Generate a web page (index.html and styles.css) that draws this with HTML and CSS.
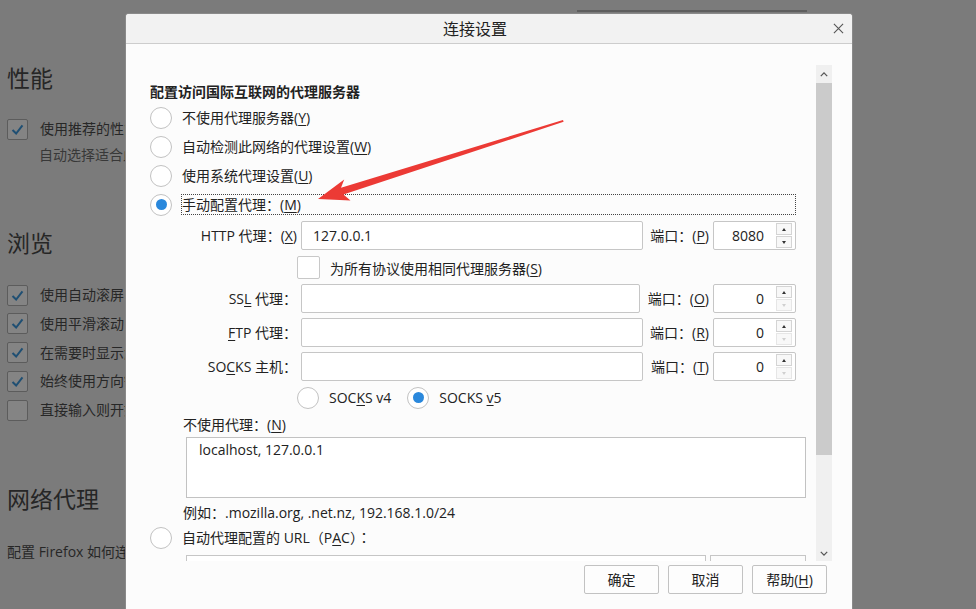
FILE: index.html
```html
<!DOCTYPE html>
<html lang="zh-CN">
<head>
<meta charset="utf-8">
<title>连接设置</title>
<link rel="stylesheet" href="styles.css">
</head>
<body>
<div class="page">
  <div class="topbar"><div class="search"></div></div>
  <h2 class="sec sec-perf">性能</h2>
  <div class="cb-row first"><span class="cb on"><svg viewBox="0 0 21 21"><path d="M5 11 L9 15 L16 6" /></svg></span><span>使用推荐的性能设置</span></div>
  <div class="sub">自动选择适合此计算机的性能设置。</div>
  <h2 class="sec sec-browse">浏览</h2>
  <div class="cb-list">
    <div class="cb-row"><span class="cb on"><svg viewBox="0 0 21 21"><path d="M5 11 L9 15 L16 6" /></svg></span><span>使用自动滚屏</span></div>
    <div class="cb-row"><span class="cb on"><svg viewBox="0 0 21 21"><path d="M5 11 L9 15 L16 6" /></svg></span><span>使用平滑滚动</span></div>
    <div class="cb-row"><span class="cb on"><svg viewBox="0 0 21 21"><path d="M5 11 L9 15 L16 6" /></svg></span><span>在需要时显示触摸键盘</span></div>
    <div class="cb-row"><span class="cb on"><svg viewBox="0 0 21 21"><path d="M5 11 L9 15 L16 6" /></svg></span><span>始终使用方向键浏览网页</span></div>
    <div class="cb-row"><span class="cb"></span><span>直接输入则开始查找</span></div>
  </div>
  <h2 class="sec sec-net">网络代理</h2>
  <div class="net-desc">配置 Firefox 如何连接至互联网。</div>
</div>

<div class="dialog">
  <div class="titlebar">
    <div class="title">连接设置</div>
    <div class="close"><svg viewBox="0 0 12 12"><path d="M1 1 L11 11 M11 1 L1 11" /></svg></div>
  </div>
  <div class="dbody">
    <div class="content">
      <div class="group-title">配置访问国际互联网的代理服务器</div>
      <div class="radio-list">
        <div class="radio-row"><span class="radio"></span><span class="rlabel">不使用代理服务器(<u>Y</u>)</span></div>
        <div class="radio-row"><span class="radio"></span><span class="rlabel">自动检测此网络的代理设置(<u>W</u>)</span></div>
        <div class="radio-row"><span class="radio"></span><span class="rlabel">使用系统代理设置(<u>U</u>)</span></div>
        <div class="radio-row"><span class="radio on"></span><span class="rlabel focus">手动配置代理<span class="colon">：</span>(<u>M</u>)</span></div>
      </div>

      <div class="proxy-grid">
        <div class="flabel">HTTP 代理<span class="colon">：</span>(<u>X</u>)</div>
        <div class="field">127.0.0.1</div>
        <div class="plabel">端口<span class="colon">：</span>(<u>P</u>)</div>
        <div class="port"><span class="val">8080</span><span class="spin"><span class="sbtn"><i class="up"></i></span><span class="sbtn"><i class="down"></i></span></span></div>

        <div class="span-row cb-line"><span class="dcb"></span><span>为所有协议使用相同代理服务器(<u>S</u>)</span></div>

        <div class="flabel">SS<u>L</u> 代理<span class="colon">：</span></div>
        <div class="field short"></div>
        <div class="plabel">端口<span class="colon">：</span>(<u>O</u>)</div>
        <div class="port"><span class="val">0</span><span class="spin"><span class="sbtn"><i class="up"></i></span><span class="sbtn dis"><i class="down"></i></span></span></div>

        <div class="flabel"><u>F</u>TP 代理<span class="colon">：</span></div>
        <div class="field"></div>
        <div class="plabel">端口<span class="colon">：</span>(<u>R</u>)</div>
        <div class="port"><span class="val">0</span><span class="spin"><span class="sbtn"><i class="up"></i></span><span class="sbtn dis"><i class="down"></i></span></span></div>

        <div class="flabel">SO<u>C</u>KS 主机<span class="colon">：</span></div>
        <div class="field"></div>
        <div class="plabel">端口<span class="colon">：</span>(<u>T</u>)</div>
        <div class="port"><span class="val">0</span><span class="spin"><span class="sbtn"><i class="up"></i></span><span class="sbtn dis"><i class="down"></i></span></span></div>

        <div class="span-row ver-line">
          <span class="radio"></span><span class="vlabel">SOC<u>K</u>S v4</span>
          <span class="radio on"></span><span class="vlabel">SOCKS <u>v</u>5</span>
        </div>
      </div>

      <div class="np-label">不使用代理<span class="colon">：</span>(<u>N</u>)</div>
      <div class="textarea">localhost, 127.0.0.1</div>
      <div class="example">例如<span class="colon">：</span>.mozilla.org, .net.nz, 192.168.1.0/24</div>
      <div class="radio-row pac"><span class="radio"></span><span class="rlabel">自动代理配置的 URL<span class="paren">（</span>P<u>A</u>C<span class="paren">）</span><span class="colon">：</span></span></div>
      <div class="pac-line"><div class="pac-input"></div><div class="pac-btn"></div></div>
    </div>
    <div class="scrollbar">
      <div class="sb-up"><svg viewBox="0 0 10 6"><path d="M1 5 L5 1 L9 5" /></svg></div>
      <div class="sb-thumb"></div>
      <div class="sb-space"></div>
      <div class="sb-down"><svg viewBox="0 0 10 6"><path d="M1 1 L5 5 L9 1" /></svg></div>
    </div>
  </div>
  <div class="footer">
    <button class="btn">确定</button>
    <button class="btn">取消</button>
    <button class="btn">帮助(<u>H</u>)</button>
  </div>
</div>

<svg class="arrow" viewBox="0 0 260 100" width="260" height="100">
  <polygon points="253,10 253.6,11.8 33.4,84.6 40.5,90.5 8,89 34.2,69.6 31,77.8" />
</svg>
</body>
</html>
```

FILE: styles.css
```css
* { box-sizing: border-box; }
html, body { margin: 0; padding: 0; }
body {
  width: 976px;
  height: 609px;
  overflow: hidden;
  position: relative;
  background: #7b7b7b;
  font-family: "Open Sans", "Noto Sans CJK SC", sans-serif;
  font-size: 14px;
  color: #222;
}
u { text-decoration: underline; text-underline-offset: 2px; }
.colon { font-family: "Noto Sans CJK TC", sans-serif; }
.paren { font-family: "Noto Sans CJK TC", sans-serif; }

/* background page */
.page { padding-left: 7px; color: #272727; }
.topbar { height: 12px; display: flex; padding-left: 570px; }
.search { width: 230px; height: 12px; border-bottom: 2px solid #5e5e5e; }
.sec { margin: 0; font-weight: normal; font-size: 23px; line-height: 32px; height: 32px; color: #262626; }
.sec-perf { margin-top: 50px; }
.sec-browse { margin-top: 62px; }
.sec-net { margin-top: 62px; }
.cb-row { display: flex; align-items: center; gap: 12px; height: 22px; white-space: nowrap; line-height: 22px; }
.cb-row.first { margin-top: 24px; }
.cb { width: 21px; height: 21px; border: 1px solid #5c5c5c; border-radius: 2px; background: #848484; flex: none; }
.cb svg { width: 19px; height: 19px; display: block; }
.cb svg path { fill: none; stroke: #1f4f73; stroke-width: 2.2; }
.sub { margin-top: 5px; margin-left: 32px; line-height: 20px; height: 20px; color: #383838; white-space: nowrap; }
.cb-list { margin-top: 25px; display: flex; flex-direction: column; gap: 6.75px; }
.net-desc { margin-top: 27px; line-height: 20px; white-space: nowrap; }

/* dialog */
.dialog {
  position: absolute;
  left: 126px;
  top: 14px;
  width: 726px;
  height: 610px;
  background: #fcfcfc;
  border-radius: 3px 3px 0 0;
  box-shadow: 0 0 0 1px #8a8a8a;
  display: flex;
  flex-direction: column;
}
.titlebar {
  height: 30px;
  flex: none;
  display: flex;
  align-items: center;
  background: #f2f2f2;
  border-bottom: 1px solid #cdcdcd;
  border-radius: 3px 3px 0 0;
}
.title { flex: 1; text-align: center; font-size: 16px; color: #222; line-height: 29px; padding-top: 1px; }
.close { width: 28px; height: 29px; display: flex; align-items: center; justify-content: center; }
.close svg { width: 11px; height: 11px; }
.close svg path { stroke: #555; stroke-width: 1.2; fill: none; }

.dbody { height: 517px; flex: none; display: flex; }
.content {
  width: 690px;
  padding: 39px 20px 0 24px;
  overflow: hidden;
  flex: none;
}
.group-title { font-weight: bold; line-height: 18px; height: 18px; white-space: nowrap; }
.radio-list { margin-top: 2px; }
.radio-row { height: 29px; display: flex; align-items: center; gap: 9px; }
.radio {
  width: 22px; height: 22px; flex: none;
  border: 1px solid #c2c2c2; border-radius: 50%; background: #fff;
  display: flex; align-items: center; justify-content: center;
}
.radio.on::after { content: ""; width: 11px; height: 11px; border-radius: 50%; background: #2a88dc; }
.rlabel { border: 1px solid transparent; line-height: 19px; height: 21px; white-space: nowrap; }
.rlabel.focus { flex: 1; border: 1px dotted #444; }

.proxy-grid {
  margin: 2px 0 0 33px;
  display: grid;
  grid-template-columns: 114px 342px 62px 83px;
  column-gap: 4px;
  row-gap: 5px;
  align-items: center;
}
.flabel, .plabel { text-align: right; white-space: nowrap; line-height: 29px; }
.field, .port {
  height: 29px;
  border: 1px solid #c6c6c6;
  border-radius: 2px;
  background: #fff;
  line-height: 27px;
  padding-left: 11px;
}
.field.short { width: 339px; }
.port { display: flex; align-items: center; padding-left: 0; }
.val { flex: 1; text-align: right; padding-right: 12px; }
.spin { width: 16px; height: 25px; margin-right: 3px; display: flex; flex-direction: column; gap: 1px; }
.sbtn { flex: 1; border: 1px solid #d4d4d4; background: #f8f8f8; display: flex; align-items: center; justify-content: center; }
.sbtn i { display: block; width: 0; height: 0; border-left: 2.5px solid transparent; border-right: 2.5px solid transparent; }
.sbtn i.up { border-bottom: 3px solid #333; }
.sbtn i.down { border-top: 3px solid #333; }
.sbtn.dis { border-color: #e6e6e6; }
.sbtn.dis i.down { border-top-color: #d0d0d0; }

.span-row { grid-column: 2 / -1; display: flex; align-items: center; margin-left: -4px; white-space: nowrap; }
.cb-line { height: 23px; margin-top: 1px; gap: 10px; }
.dcb { width: 23px; height: 23px; border: 1px solid #c8c8c8; border-radius: 2px; background: #fff; flex: none; }
.ver-line { height: 23px; gap: 10px; }
.vlabel { margin-right: 6px; }

.np-label { margin: 6px 0 0 33px; line-height: 18px; height: 18px; }
.textarea {
  margin: 4px 0 0 36px;
  width: 620px;
  height: 61px;
  border: 1px solid #c2c2c2;
  background: #fff;
  padding: 3px 12px;
  line-height: 18px;
}
.example { margin: 5px 0 0 33px; line-height: 18px; height: 18px; white-space: nowrap; }
.radio-row.pac { margin-top: 2px; }
.pac-line { margin: 3px 0 0 36px; width: 620px; display: flex; gap: 4px; }
.pac-input { flex: 1; height: 29px; border: 1px solid #c6c6c6; background: #fff; }
.pac-btn { width: 96px; height: 29px; border: 1px solid #c6c6c6; }

.scrollbar {
  width: 16px;
  margin-top: 21px;
  height: 496px;
  background: #f0f0f0;
  display: flex;
  flex-direction: column;
  flex: none;
}
.sb-up, .sb-down { height: 18px; display: flex; align-items: center; justify-content: center; }
.sb-down { height: 16px; }
.sb-up svg, .sb-down svg { width: 8px; height: 5px; }
.sb-up svg path, .sb-down svg path { fill: none; stroke: #555; stroke-width: 1.6; }
.sb-thumb { height: 372px; background: #cbcbcb; }
.sb-space { flex: 1; }

.footer { display: flex; justify-content: flex-end; gap: 9px; padding: 4px 25px 0 0; }
.btn {
  width: 75px;
  height: 29px;
  border: 1px solid #c2c2c2;
  border-radius: 2px;
  background: #fdfdfd;
  font-family: "Open Sans", "Noto Sans CJK SC", sans-serif;
  font-size: 14px;
  color: #222;
  padding: 0;
  line-height: 27px;
  white-space: nowrap;
}

.arrow { position: absolute; left: 310px; top: 110px; }
.arrow polygon { fill: #ec3a35; }
```
